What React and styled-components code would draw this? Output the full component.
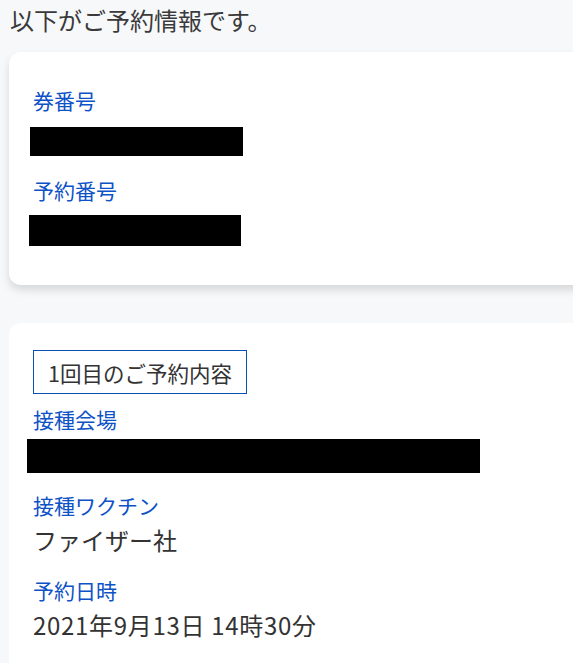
import React from 'react'
import styled, { createGlobalStyle } from 'styled-components'

const GlobalStyle = createGlobalStyle`
  html, body {
    margin: 0;
    padding: 0;
    background: #f7f8fa;
    overflow: hidden;
  }
  body {
    font-family: "Noto Sans CJK JP", "Noto Sans", sans-serif;
    color: #333;
  }
`

const Page = styled.div`
  padding: 4px 0 0 9px;
  width: 620px;
`

const Lead = styled.p`
  margin: 0 0 16px 1px;
  font-size: 24px;
  line-height: 32px;
  color: #3a3a3a;
`

const Card = styled.section`
  background: #fff;
  border-radius: 12px;
  padding: ${p => p.pad};
  margin-bottom: 38px;
  box-shadow: ${p => p.shadow ? '0 5px 8px rgba(0, 0, 0, 0.13)' : 'none'};
`

const Badge = styled.div`
  display: flex;
  align-items: center;
  width: fit-content;
  border: 1px solid #0a4fb3;
  padding: 0 14px;
  height: 42px;
  font-size: 21.5px;
  color: #333;
  margin-bottom: 10px;
`

const Field = styled.div`
  margin-bottom: ${p => p.gap ?? 20}px;
`

const Label = styled.div`
  font-size: 21px;
  line-height: 30px;
  color: #0d52c6;
`

const Value = styled.div`
  margin-top: 3px;
  font-size: 24px;
  line-height: 34px;
  letter-spacing: ${p => p.spread || 0}px;
  color: #333;
`

const Redacted = styled.div`
  background: #000;
  width: ${p => p.w}px;
  height: ${p => p.h}px;
  margin: ${p => p.top}px 0 0 ${p => p.shift}px;
`

export default function App() {
  return (
    <>
      <GlobalStyle />
      <Page>
        <Lead>以下がご予約情報です。</Lead>

        <Card shadow pad="33px 24px 39px">
          <Field gap={19}>
            <Label>券番号</Label>
            <Redacted w={213} h={29} top={12} shift={-3} />
          </Field>
          <Field gap={0}>
            <Label>予約番号</Label>
            <Redacted w={212} h={31} top={10} shift={-4} />
          </Field>
        </Card>

        <Card pad="27px 24px 30px">
          <Badge>1回目のご予約内容</Badge>
          <Field gap={17}>
            <Label>接種会場</Label>
            <Redacted w={453} h={34} top={5} shift={-6} />
          </Field>
          <Field gap={18}>
            <Label>接種ワクチン</Label>
            <Value>ファイザー社</Value>
          </Field>
          <Field gap={0}>
            <Label>予約日時</Label>
            <Value spread={0.7}>2021年9月13日 14時30分</Value>
          </Field>
        </Card>
      </Page>
    </>
  )
}
